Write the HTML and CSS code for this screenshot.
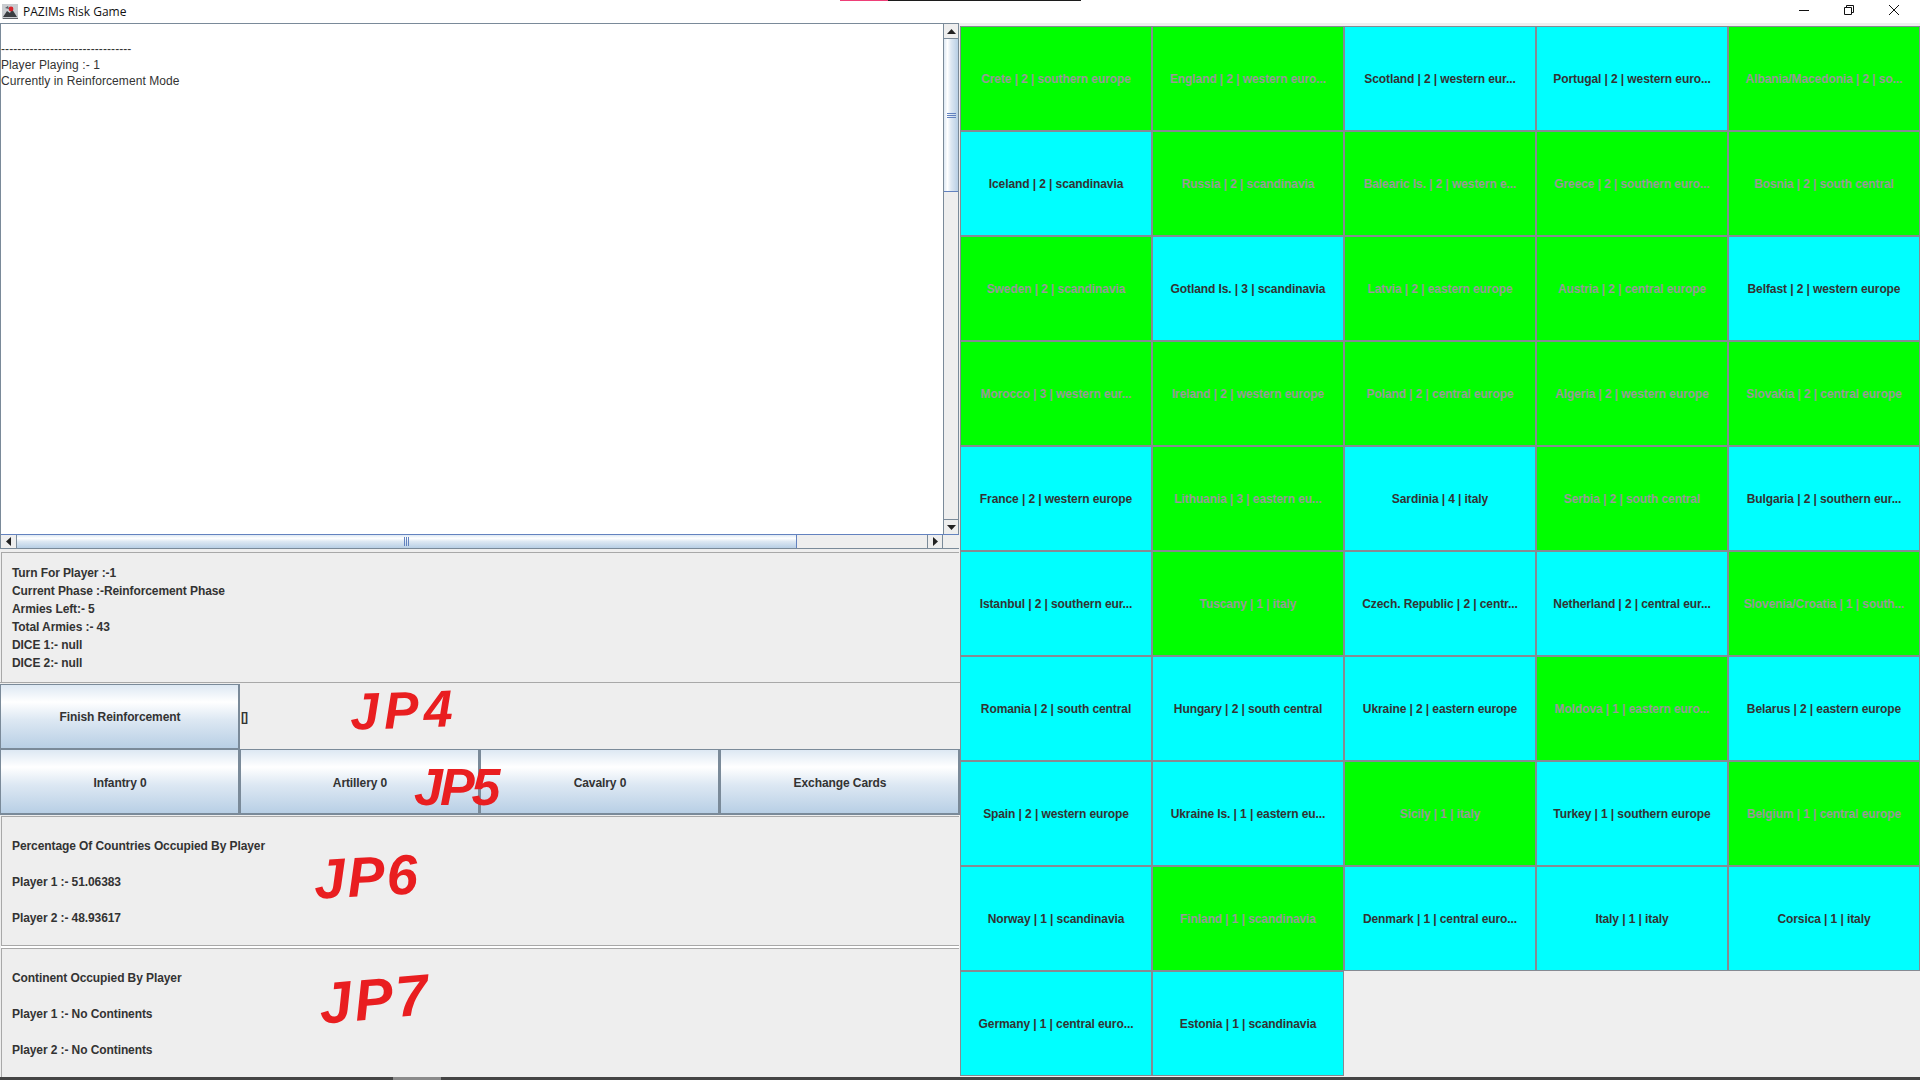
FILE: index.html
```html
<!DOCTYPE html>
<html lang="en">
<head>
<meta charset="utf-8">
<title>PAZIMs Risk Game</title>
<link rel="stylesheet" href="styles.css">
</head>
<body>
<div class="window">
  <header class="titlebar">
    <svg class="app-icon" width="17" height="17" viewBox="0 0 17 17"><rect x="0" y="1" width="16" height="15" fill="#c9ccd0"/><path d="M1 14 L5 8 L8 10 L10 6 L15 14 Z" fill="#3a3d42"/><path d="M1 15 H16 V16 H1 Z" fill="#60646a"/><circle cx="9" cy="6" r="2.4" fill="#d8222a"/><path d="M3 5 L6 3 L7 6 Z" fill="#5b5f66"/></svg>
    <span class="app-title">PAZIMs Risk Game</span>
    <div class="top-strip"><i class="strip-pink"></i><i class="strip-dark"></i></div>
    <div class="win-controls">
      <svg class="win-btn" width="12" height="12" viewBox="0 0 12 12"><path d="M1 6.5 H11" stroke="#111" fill="none"/></svg>
      <svg class="win-btn" width="12" height="12" viewBox="0 0 12 12"><path d="M1.5 3.5 H8.5 V10.5 H1.5 Z M3.5 3.5 V1.5 H10.5 V8.5 H8.5" stroke="#111" fill="none"/></svg>
      <svg class="win-btn" width="12" height="12" viewBox="0 0 12 12"><path d="M1 1 L11 11 M11 1 L1 11" stroke="#111" fill="none"/></svg>
    </div>
  </header>

  <main class="content">
    <section class="left">
      <div class="scrollpane">
        <div class="pane-top">
          <div class="log">
            <div class="log-blank">&nbsp;</div>
            <div>--------------------------------</div>
            <div>Player Playing :- 1</div>
            <div>Currently in Reinforcement Mode</div>
          </div>
          <div class="vbar">
            <div class="sb-btn sb-btn-v"><svg width="9" height="5" viewBox="0 0 9 5"><path d="M4.5 0 L9 5 H0 Z" fill="#222"/></svg></div>
            <div class="vthumb"><i></i><i></i><i></i></div>
            <div class="vtrack"></div>
            <div class="sb-btn sb-btn-v sb-btn-down"><svg width="9" height="5" viewBox="0 0 9 5"><path d="M0 0 H9 L4.5 5 Z" fill="#222"/></svg></div>
          </div>
        </div>
        <div class="hbar">
          <div class="sb-btn sb-btn-h"><svg width="5" height="9" viewBox="0 0 5 9"><path d="M5 0 V9 L0 4.5 Z" fill="#222"/></svg></div>
          <div class="hthumb"><i></i><i></i><i></i></div>
          <div class="htrack"></div>
          <div class="sb-btn sb-btn-h sb-btn-right"><svg width="5" height="9" viewBox="0 0 5 9"><path d="M0 0 L5 4.5 L0 9 Z" fill="#222"/></svg></div>
          <div class="corner"></div>
        </div>
      </div>

      <div class="panel info">
        <div>Turn For Player :-1</div>
        <div>Current Phase :-Reinforcement Phase</div>
        <div>Armies Left:- 5</div>
        <div>Total Armies :- 43</div>
        <div>DICE 1:- null</div>
        <div>DICE 2:- null</div>
      </div>

      <div class="finish-row">
        <button class="jbtn finish">Finish Reinforcement</button>
        <span class="box-label">[]</span>
        <span class="scrawl scrawl-jp4">JP4</span>
      </div>

      <div class="button-row">
        <button class="jbtn">Infantry 0</button>
        <button class="jbtn">Artillery 0</button>
        <button class="jbtn">Cavalry 0</button>
        <button class="jbtn">Exchange Cards</button>
        <span class="scrawl scrawl-jp5">JP5</span>
      </div>

      <div class="panel stats">
        <div>Percentage Of Countries Occupied By Player</div>
        <div>Player 1 :- 51.06383</div>
        <div>Player 2 :- 48.93617</div>
        <span class="scrawl scrawl-jp6">JP6</span>
      </div>

      <div class="panel stats stats-last">
        <div>Continent Occupied By Player</div>
        <div>Player 1 :- No Continents</div>
        <div>Player 2 :- No Continents</div>
        <span class="scrawl scrawl-jp7">JP7</span>
      </div>
    </section>

    <section class="board">
      <div class="cell g">Crete | 2 | southern europe</div>
      <div class="cell g">England | 2 | western euro...</div>
      <div class="cell c">Scotland | 2 | western eur...</div>
      <div class="cell c">Portugal | 2 | western euro...</div>
      <div class="cell g">Albania/Macedonia | 2 | so...</div>

      <div class="cell c">Iceland | 2 | scandinavia</div>
      <div class="cell g">Russia | 2 | scandinavia</div>
      <div class="cell g">Balearic Is. | 2 | western e...</div>
      <div class="cell g">Greece | 2 | southern euro...</div>
      <div class="cell g">Bosnia | 2 | south central</div>

      <div class="cell g">Sweden | 2 | scandinavia</div>
      <div class="cell c">Gotland Is. | 3 | scandinavia</div>
      <div class="cell g">Latvia | 2 | eastern europe</div>
      <div class="cell g">Austria | 2 | central europe</div>
      <div class="cell c">Belfast | 2 | western europe</div>

      <div class="cell g">Morocco | 3 | western eur...</div>
      <div class="cell g">Ireland | 2 | western europe</div>
      <div class="cell g">Poland | 2 | central europe</div>
      <div class="cell g">Algeria | 2 | western europe</div>
      <div class="cell g">Slovakia | 2 | central europe</div>

      <div class="cell c">France | 2 | western europe</div>
      <div class="cell g">Lithuania | 3 | eastern eu...</div>
      <div class="cell c">Sardinia | 4 | italy</div>
      <div class="cell g">Serbia | 2 | south central</div>
      <div class="cell c">Bulgaria | 2 | southern eur...</div>

      <div class="cell c">Istanbul | 2 | southern eur...</div>
      <div class="cell g">Tuscany | 1 | italy</div>
      <div class="cell c">Czech. Republic | 2 | centr...</div>
      <div class="cell c">Netherland | 2 | central eur...</div>
      <div class="cell g">Slovenia/Croatia | 1 | south...</div>

      <div class="cell c">Romania | 2 | south central</div>
      <div class="cell c">Hungary | 2 | south central</div>
      <div class="cell c">Ukraine | 2 | eastern europe</div>
      <div class="cell g">Moldova | 1 | eastern euro...</div>
      <div class="cell c">Belarus | 2 | eastern europe</div>

      <div class="cell c">Spain | 2 | western europe</div>
      <div class="cell c">Ukraine Is. | 1 | eastern eu...</div>
      <div class="cell g">Sicily | 1 | italy</div>
      <div class="cell c">Turkey | 1 | southern europe</div>
      <div class="cell g">Belgium | 1 | central europe</div>

      <div class="cell c">Norway | 1 | scandinavia</div>
      <div class="cell g">Finland | 1 | scandinavia</div>
      <div class="cell c">Denmark | 1 | central euro...</div>
      <div class="cell c">Italy | 1 | italy</div>
      <div class="cell c">Corsica | 1 | italy</div>

      <div class="cell c">Germany | 1 | central euro...</div>
      <div class="cell c">Estonia | 1 | scandinavia</div>
    </section>
  </main>
  <div class="taskbar-edge"></div>
</div>
</body>
</html>
```

FILE: styles.css
```css
* { box-sizing: border-box; }
html, body { margin: 0; padding: 0; }
body { width: 1920px; height: 1080px; overflow: hidden; background: #eeeeee; font-family: "Liberation Sans", Arial, sans-serif; }
.window { width: 1920px; height: 1080px; display: flex; flex-direction: column; }

.titlebar { height: 23px; flex: none; background: #ffffff; display: flex; align-items: center; padding-left: 2px; position: relative; }
.app-icon { flex: none; }
.app-title { margin-left: 4px; font: 12px "Open Sans", "Noto Sans", sans-serif; color: #111; }
.top-strip { position: absolute; left: 840px; top: 0; width: 241px; height: 1px; display: flex; }
.strip-pink { width: 48px; background: #ee3f78; }
.strip-dark { flex: 1; background: #1c1c1c; }
.win-controls { margin-left: auto; display: flex; align-items: center; height: 100%; padding-right: 20px; gap: 33px; }
.win-btn { display: block; margin-top: -3px; }

.content { flex: none; height: 1054px; display: flex; }
.left { width: 960px; flex: none; display: flex; flex-direction: column; }

.scrollpane { height: 526px; flex: none; width: 959px; display: flex; flex-direction: column; border-top: 1px solid #7a8a99; border-left: 1px solid #7a8a99; background: #eeeeee; }
.pane-top { flex: 1; display: flex; min-height: 0; }
.log { flex: 1; background: #ffffff; font-size: 12px; line-height: 16px; letter-spacing: 0.08px; color: #333333; padding: 0; white-space: nowrap; }
.log-blank { height: 17px; }

.vbar { width: 16px; flex: none; display: flex; flex-direction: column; background: #eeeeee; border-left: 1px solid #7a8a99; border-right: 1px solid #7a8a99; }
.sb-btn { display: flex; align-items: center; justify-content: center; background: #eeeeee; flex: none; }
.sb-btn-v { height: 15px; border-bottom: 1px solid #7a8a99; }
.sb-btn-down { border-bottom: none; border-top: 1px solid #7a8a99; }
.vthumb { height: 153px; flex: none; display: flex; flex-direction: column; align-items: center; justify-content: center; gap: 1px; background: linear-gradient(90deg, #dde8f3 0%, #ffffff 25%, #dde8f3 50%, #b8cfe5 100%); border-bottom: 1px solid #6382bf; }
.vthumb i { display: block; width: 9px; height: 1px; background: #6382bf; }
.vtrack { flex: 1; }

.hbar { height: 15px; flex: none; display: flex; border-top: 1px solid #6382bf; border-bottom: 1px solid #7a8a99; background: #eeeeee; }
.sb-btn-h { width: 16px; border-right: 1px solid #7a8a99; }
.sb-btn-right { border-right: 1px solid #7a8a99; border-left: 1px solid #7a8a99; }
.hthumb { width: 780px; flex: none; display: flex; align-items: center; justify-content: center; gap: 1px; background: linear-gradient(180deg, #dde8f3 0%, #ffffff 25%, #dde8f3 50%, #b8cfe5 100%); border-right: 1px solid #6382bf; }
.hthumb i { display: block; width: 1px; height: 9px; background: #6382bf; }
.htrack { flex: 1; }
.corner { width: 16px; flex: none; }

.panel { width: 958px; margin-left: 1px; background: #eeeeee; border-top: 1px solid #a8a8a8; border-left: 1px solid #a8a8a8; font-size: 12px; font-weight: bold; letter-spacing: -0.09px; color: #333333; position: relative; padding-left: 10px; flex: none; }
.info { margin-top: 3px; height: 130px; padding-top: 11px; line-height: 18px; }
.stats { margin-top: 1px; height: 130px; padding-top: 11px; line-height: 36px; border-bottom: 1px solid #a8a8a8; }
.stats-last { margin-top: 2px; height: 129px; border-bottom: none; box-shadow: 0 -2px 0 #ffffff; }

.finish-row { height: 67px; flex: none; padding-top: 1px; display: flex; align-items: center; position: relative; border-top: 1px solid #a8a8a8; }
.button-row { height: 66px; flex: none; display: flex; position: relative; }

.jbtn { margin: 0; padding: 2px 0 0 1px; width: 240px; flex: none; height: 100%; font: bold 12px "Liberation Sans", Arial, sans-serif; letter-spacing: -0.09px; color: #333333; border: 1px solid #7a8a99; border-right-width: 2px; border-bottom-width: 2px; background: linear-gradient(180deg, #dde8f3 0%, #ffffff 27%, #dde8f3 55%, #b8cfe5 100%); }
.finish { height: 66px; }
.box-label { margin-left: 1px; font-size: 12px; font-weight: bold; letter-spacing: -1px; color: #333333; }

.scrawl { position: absolute; font-family: "Liberation Sans", Arial, sans-serif; font-weight: bold; font-style: italic; color: #e91e20; line-height: 1; white-space: nowrap; }
.scrawl-jp4 { left: 350px; top: 1px; font-size: 52px; letter-spacing: 5px; transform: rotate(-2deg); }
.scrawl-jp5 { left: 414px; top: 12px; font-size: 52px; letter-spacing: -3px; }
.scrawl-jp6 { left: 312px; top: 32px; font-size: 56px; letter-spacing: 2px; transform: rotate(-3deg); }
.scrawl-jp7 { left: 317px; top: 21px; font-size: 58px; letter-spacing: 3px; transform: rotate(-5deg); }

.board { width: 960px; flex: none; padding-top: 3px; display: grid; grid-template-columns: repeat(5, 192px); grid-auto-rows: 105px; align-content: start; background: #efefef; }
.cell { display: flex; align-items: center; justify-content: center; font-size: 12px; font-weight: bold; letter-spacing: -0.09px; border: 1px solid #868a92; white-space: nowrap; overflow: hidden; }
.g { background: #00ff00; color: #999999; }
.c { background: #00ffff; color: #333333; }

.taskbar-edge { height: 3px; flex: none; background: linear-gradient(90deg, #444444 0, #444444 393px, #8a8a8a 393px, #8a8a8a 441px, #444444 441px); }
```
